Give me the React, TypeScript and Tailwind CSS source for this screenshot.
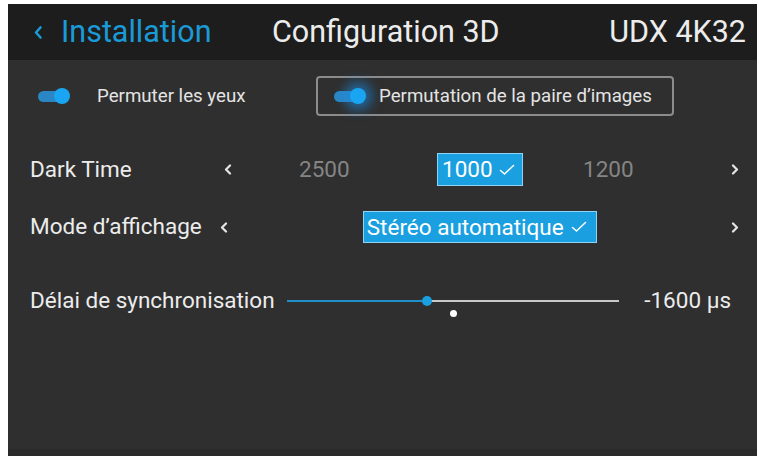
import React from "react";

function Toggle({ glow = false }: { glow?: boolean }) {
  return (
    <div className="relative w-[32px] h-[14px] flex items-center">
      <div className="w-[26px] h-[11px] rounded-full bg-[#2a86c4]" />
      <div
        className={
          "absolute right-0 top-1/2 -translate-y-1/2 w-[16px] h-[16px] rounded-full bg-[#1aa5f2] " +
          (glow ? "shadow-[0_0_12px_6px_rgba(26,140,230,0.6)]" : "")
        }
      />
    </div>
  );
}

function Chevron({ dir }: { dir: "l" | "r" }) {
  return (
    <svg width="8" height="11" viewBox="0 0 8 11" className="block">
      <path
        d={dir === "l" ? "M6 1.5 L2 5.5 L6 9.5" : "M2 1.5 L6 5.5 L2 9.5"}
        fill="none"
        stroke="#e6e6e6"
        strokeWidth="2.2"
        strokeLinecap="round"
        strokeLinejoin="round"
      />
    </svg>
  );
}

function Check() {
  return (
    <svg width="16" height="12" viewBox="0 0 16 12" className="block">
      <path d="M1.5 6.5 L5.5 10 L14.5 1.5" fill="none" stroke="#ffffff" strokeWidth="1.5" strokeLinecap="round" strokeLinejoin="round" />
    </svg>
  );
}

export default function App() {
  return (
    <div
      className="w-[759px] h-[456px] bg-white pt-[4px] pl-[8px] pr-[2px] overflow-hidden"
      style={{ fontFamily: "Roboto, 'Liberation Sans', sans-serif" }}
    >
      <div className="w-full h-full flex flex-col bg-[#2f2f2f]">
        {/* Header */}
        <div className="h-[56px] bg-[#1d1d1d] flex items-center pl-[25px] pr-[11px] shrink-0">
          <div className="flex items-center w-[239px] text-[#1b9ad8]">
            <svg width="10" height="15" viewBox="0 0 10 15" className="block mt-[1px]">
              <path d="M7.5 2.5 L3 7.5 L7.5 12.5" fill="none" stroke="#1b9ad8" strokeWidth="2.6" strokeLinecap="round" strokeLinejoin="round" />
            </svg>
            <span className="ml-[18px] text-[30.5px] leading-none">Installation</span>
          </div>
          <div className="flex-1 text-[30.5px] leading-none text-[#ececec]">Configuration 3D</div>
          <div className="text-[30.5px] leading-none text-[#ececec]">UDX 4K32</div>
        </div>

        {/* Toggle row */}
        <div className="mt-[16px] h-[40px] flex items-center pl-[30px]">
          <Toggle />
          <span className="ml-[27px] text-[18.7px] text-[#e4e4e4] w-[219px]">Permuter les yeux</span>
          <div className="w-[358px] h-[40px] border-2 border-[#8c8c8c] rounded-[4px] flex items-center pl-[16px]">
            <Toggle glow />
            <span className="ml-[13px] text-[18.7px] text-[#e4e4e4]">Permutation de la paire d’images</span>
          </div>
        </div>

        {/* Dark Time row */}
        <div className="mt-[37px] h-[33px] flex items-center pl-[22px] pr-[18px]">
          <span className="w-[194px] text-[22.5px] text-[#ececec]">Dark Time</span>
          <Chevron dir="l" />
          <span className="ml-[67px] w-[50px] text-[22.5px] text-[#858585]">2500</span>
          <div className="ml-[88px] w-[86px] h-[33px] bg-[#1a9fe0] border border-[#8fd3f5] flex items-center pl-[4px] gap-[6px]">
            <span className="text-[22.5px] text-white leading-none">1000</span>
            <Check />
          </div>
          <span className="ml-[60px] text-[22.5px] text-[#858585]">1200</span>
          <div className="ml-auto"><Chevron dir="r" /></div>
        </div>

        {/* Mode row */}
        <div className="mt-[25px] h-[32px] flex items-center pl-[22px] pr-[18px]">
          <span className="text-[22.5px] text-[#ececec]">Mode d’affichage</span>
          <div className="ml-[18px]"><Chevron dir="l" /></div>
          <div className="ml-[135px] w-[234px] h-[32px] bg-[#1a9fe0] border border-[#8fd3f5] flex items-center pl-[3px] gap-[7px]">
            <span className="text-[22.5px] text-white leading-none">Stéréo automatique</span>
            <Check />
          </div>
          <div className="ml-auto"><Chevron dir="r" /></div>
        </div>

        {/* Slider row */}
        <div className="mt-[43px] h-[30px] flex items-center pl-[22px] pr-[26px]">
          <span className="text-[22.5px] text-[#ececec]">Délai de synchronisation</span>
          <div className="relative ml-[12px] w-[332px] h-[2px] bg-[#c8c8c8]">
            <div className="absolute left-0 top-0 h-[2px] w-[140px] bg-[#2190c8]" />
            <div className="absolute left-[135px] -top-[4px] w-[10px] h-[10px] rounded-full bg-[#1a9fe0]" />
            <div className="absolute left-[163px] top-[10px] w-[7px] h-[7px] rounded-full bg-white" />
          </div>
          <span className="ml-auto text-[22.5px] text-[#ececec]">-1600 µs</span>
        </div>

        <div className="flex-1" />
        <div className="h-[7px] bg-[#2a2a2a] shrink-0" />
      </div>
    </div>
  );
}
